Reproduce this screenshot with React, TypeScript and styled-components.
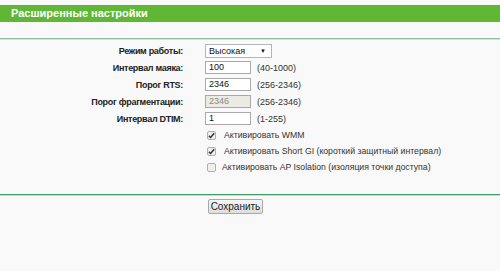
import React from 'react';
import styled, { createGlobalStyle } from 'styled-components';

const GlobalStyle = createGlobalStyle`
  html, body {
    margin: 0;
    padding: 0;
    background: #f9f9f9;
    font-family: 'Liberation Sans', Arial, sans-serif;
  }
`;

type Row =
  | { kind: 'select'; label: string; value: string }
  | { kind: 'input'; label: string; value: string; hint: string; disabled?: boolean };

const rows: Row[] = [
  { kind: 'select', label: 'Режим работы:', value: 'Высокая' },
  { kind: 'input', label: 'Интервал маяка:', value: '100', hint: '(40-1000)' },
  { kind: 'input', label: 'Порог RTS:', value: '2346', hint: '(256-2346)' },
  { kind: 'input', label: 'Порог фрагментации:', value: '2346', hint: '(256-2346)', disabled: true },
  { kind: 'input', label: 'Интервал DTIM:', value: '1', hint: '(1-255)' },
];

const checks = [
  { label: 'Активировать WMM', checked: true },
  { label: 'Активировать Short GI (короткий защитный интервал)', checked: true },
  { label: 'Активировать AP Isolation (изоляция точки доступа)', checked: false },
];

function App() {
  return (
    <Page>
      <GlobalStyle />
      <Header>Расширенные настройки</Header>
      <Divider $tone="light" />
      <Form>
        {rows.map((r) => (
          <React.Fragment key={r.label}>
            <Label>{r.label}</Label>
            {r.kind === 'select' ? (
              <Field>
                <Select>
                  <span>{r.value}</span>
                  <Arrow>▼</Arrow>
                </Select>
              </Field>
            ) : (
              <Field>
                <TextInput $disabled={r.disabled}>{r.value}</TextInput>
                <Hint>{r.hint}</Hint>
              </Field>
            )}
          </React.Fragment>
        ))}
        {checks.map((c) => (
          <React.Fragment key={c.label}>
            <span />
            <CheckRow $tight={!c.checked}>
              <Box>
                {c.checked && (
                  <svg width="7" height="7" viewBox="0 0 8 8">
                    <path d="M1 4.2 L3 6.2 L7 1.5" fill="none" stroke="#333" strokeWidth="1.7" />
                  </svg>
                )}
              </Box>
              <CheckText>{c.label}</CheckText>
            </CheckRow>
          </React.Fragment>
        ))}
      </Form>
      <Divider $tone="dark" />
      <Actions>
        <SaveButton>Сохранить</SaveButton>
      </Actions>
    </Page>
  );
}

export default App;

const Page = styled.main`
  width: 500px;
  height: 271px;
  padding-top: 5px;
  box-sizing: border-box;
  background: #f9f9f9;
`;

const Header = styled.h1`
  margin: 0;
  height: 17px;
  line-height: 17px;
  padding-left: 11px;
  background: #60b635;
  color: #fff;
  font-size: 11px;
  font-weight: bold;
`;

const Divider = styled.div<{ $tone: 'light' | 'dark' }>`
  height: 1px;
  background: ${(p) => (p.$tone === 'light' ? '#8fbca3' : '#459b67')};
  border-bottom: 1px solid ${(p) => (p.$tone === 'light' ? '#d3e3d9' : '#c6ddcf')};
  margin-top: ${(p) => (p.$tone === 'light' ? '16px' : '19px')};
`;

const Form = styled.div`
  display: grid;
  grid-template-columns: 183px 1fr;
  grid-template-rows: repeat(5, 17px) repeat(3, 16px);
  column-gap: 22px;
  padding-top: 2px;
  align-items: center;
`;

const Label = styled.div`
  text-align: right;
  font-size: 9px;
  font-weight: bold;
  letter-spacing: -0.3px;
  color: #222;
`;

const Field = styled.div`
  display: flex;
  align-items: center;
  gap: 6px;
`;

const Select = styled.div`
  width: 67px;
  height: 14px;
  box-sizing: border-box;
  border: 1px solid #b5b5b5;
  background: #fff;
  display: flex;
  align-items: center;
  justify-content: space-between;
  padding: 0 5px 0 3px;
  font-size: 9px;
  color: #111;
`;

const Arrow = styled.span`
  font-size: 6px;
  color: #111;
`;

const TextInput = styled.div<{ $disabled?: boolean }>`
  width: 46px;
  height: 13px;
  box-sizing: border-box;
  border: 1px solid #a9a9a9;
  background: ${(p) => (p.$disabled ? '#ebebe4' : '#fff')};
  color: ${(p) => (p.$disabled ? '#8a8a8a' : '#111')};
  font-size: 9px;
  line-height: 11px;
  padding-left: 3px;
`;

const Hint = styled.span`
  font-size: 9px;
  color: #333;
`;

const CheckRow = styled.div<{ $tight?: boolean }>`
  display: flex;
  align-items: center;
  gap: ${(p) => (p.$tight ? '6px' : '8px')};
  padding-left: 2px;
`;

const Box = styled.span`
  width: 9px;
  height: 9px;
  box-sizing: border-box;
  border: 1px solid #b0b0b0;
  border-radius: 2px;
  background: #efefef;
  display: inline-flex;
  align-items: center;
  justify-content: center;
`;

const CheckText = styled.span`
  font-size: 8.7px;
  color: #333;
`;

const Actions = styled.div`
  display: flex;
  padding-left: 208px;
  padding-top: 3px;
`;

const SaveButton = styled.button`
  width: 55px;
  height: 15px;
  padding: 0;
  border: 1px solid #a8a8a8;
  border-radius: 2px;
  background: linear-gradient(#f6f6f6, #dedede);
  font-family: 'Liberation Sans', Arial, sans-serif;
  font-size: 10px;
  color: #222;
  line-height: 13px;
`;
